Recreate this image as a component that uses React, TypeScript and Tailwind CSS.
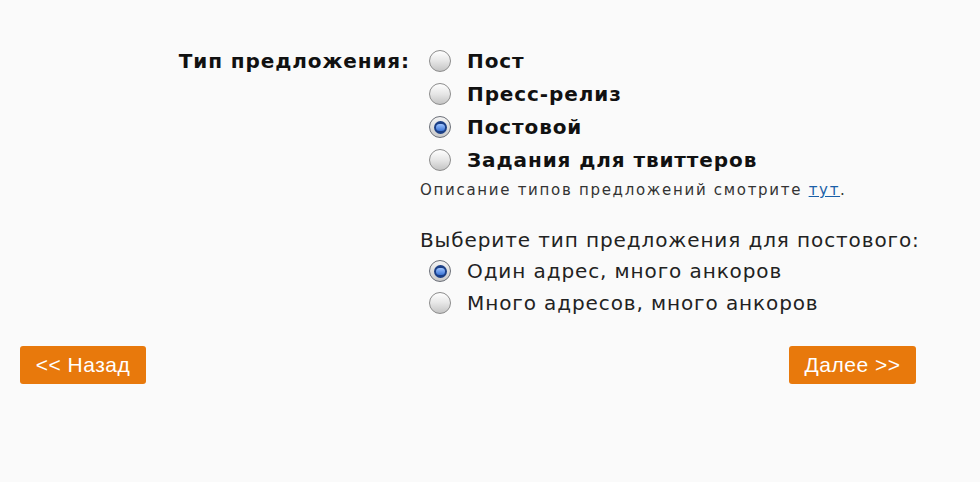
import React from "react";

function Radio({ checked }: { checked?: boolean }) {
  if (checked) {
    return (
      <span className="flex h-[22px] w-[22px] shrink-0 items-center justify-center rounded-full border border-[#6b6f78] bg-gradient-to-b from-[#f4f4f4] to-[#c9c9c9]">
        <span className="flex h-[13px] w-[13px] items-center justify-center rounded-full bg-[#1b3f86]">
          <span className="h-[7px] w-[9px] rounded-full bg-gradient-to-b from-[#9fc4ff] to-[#3a74d6]" />
        </span>
      </span>
    );
  }
  return (
    <span className="h-[22px] w-[22px] shrink-0 rounded-full border border-[#8c8c8c] bg-gradient-to-b from-[#ffffff] via-[#e6e6e6] to-[#c4c4c4]" />
  );
}

function Option({ label, checked, bold }: { label: string; checked?: boolean; bold?: boolean }) {
  return (
    <div className="flex items-center gap-[16px] pl-[9px]">
      <Radio checked={checked} />
      <span className={bold ? "font-bold text-[#111]" : "text-[#222]"}>{label}</span>
    </div>
  );
}

export default function App() {
  return (
    <div
      className="h-[482px] w-[980px] bg-[#fafafa] text-[20px] leading-[22px] tracking-[0.9px]"
      style={{ fontFamily: '"DejaVu Sans", Verdana, sans-serif' }}
    >
      <div className="flex pt-[50px]">
        <div className="w-[410px] text-right font-bold text-[#111]">Тип предложения:</div>
        <div className="ml-[10px] flex flex-col">
          <div className="flex flex-col gap-[11px]">
            <Option label="Пост" bold />
            <Option label="Пресс-релиз" bold />
            <Option label="Постовой" bold checked />
            <Option label="Задания для твиттеров" bold />
          </div>
          <div className="mt-[10px] text-[15px] leading-[18px] tracking-[1.7px] text-[#333]">
            Описание типов предложений смотрите{" "}
            <span className="text-[#1a5fa8] underline">тут</span>.
          </div>
          <div className="mt-[30px] text-[#222]">Выберите тип предложения для постового:</div>
          <div className="mt-[9px] flex flex-col gap-[10px]">
            <Option label="Один адрес, много анкоров" checked />
            <Option label="Много адресов, много анкоров" />
          </div>
        </div>
      </div>
      <div
        className="mt-[32px] flex justify-between pl-[20px] pr-[64px] tracking-[0.5px]"
        style={{ fontFamily: '"Liberation Sans", Arial, sans-serif' }}
      >
        <button className="flex h-[38px] w-[126px] items-center justify-center rounded-[3px] bg-[#e8790c] text-[21px] text-white">
          &lt;&lt; Назад
        </button>
        <button className="flex h-[38px] w-[127px] items-center justify-center rounded-[3px] bg-[#e8790c] text-[21px] text-white">
          Далее &gt;&gt;
        </button>
      </div>
    </div>
  );
}
